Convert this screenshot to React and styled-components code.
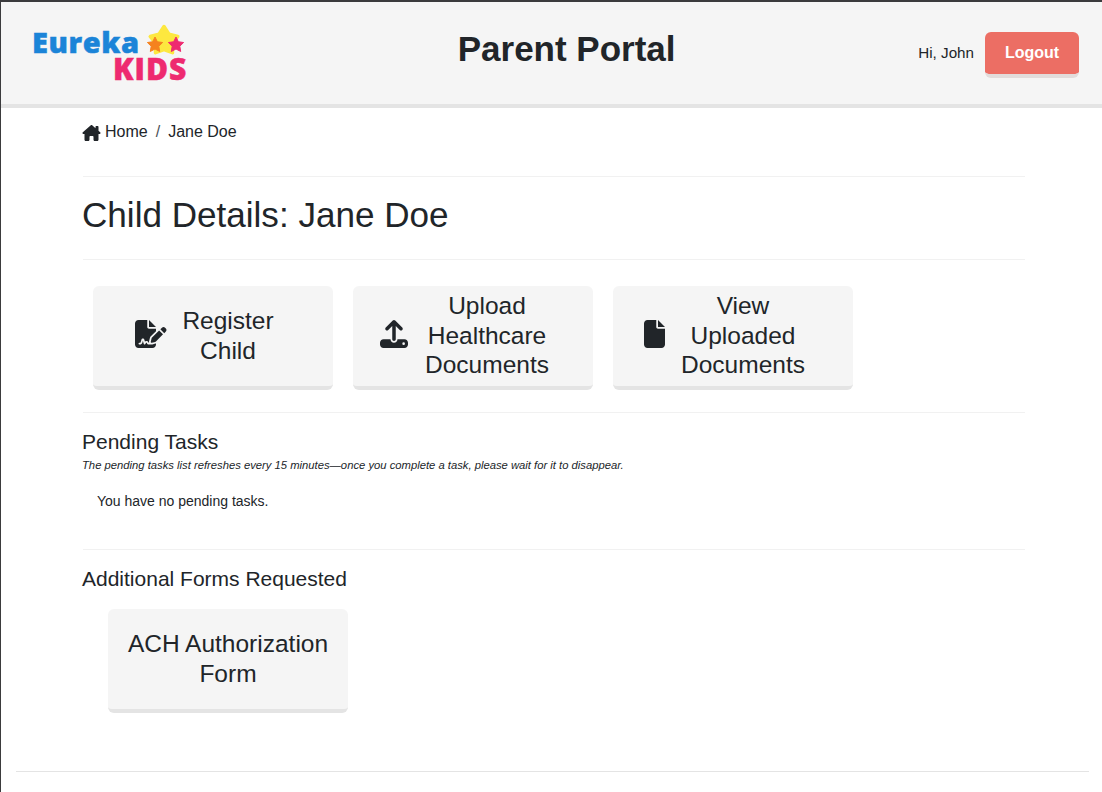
import React from 'react';
import styled, { createGlobalStyle } from 'styled-components';
import { FaHouseChimney, FaFileSignature, FaUpload, FaFile } from 'react-icons/fa6';

const GlobalStyle = createGlobalStyle`
  html, body {
    margin: 0;
    padding: 0;
    background: #fff;
  }
  body {
    font-family: "Liberation Sans", Arial, sans-serif;
    color: #212529;
  }
`;

const Page = styled.div`
  min-height: 790px;
  border-top: 2px solid #3b3b3d;
  border-left: 1px solid #3b3b3d;
  display: flex;
  flex-direction: column;
`;

const Header = styled.header`
  height: 102px;
  box-sizing: content-box;
  background: #f5f5f5;
  border-bottom: 4px solid #e4e4e4;
  display: flex;
  align-items: center;
  justify-content: space-between;
  padding: 0 23px 0 31px;
`;

const Brand = styled.div`
  width: 183px;
  align-self: flex-start;
  margin-top: 22px;
  display: flex;
  flex-direction: column;
`;

const BrandTop = styled.div`
  display: flex;
  align-items: flex-start;
  height: 33px;
`;

const BrandEureka = styled.span`
  width: 114px;
  margin-top: 3px;
  font-family: "Open Sans", sans-serif;
  font-weight: 800;
  font-size: 29px;
  line-height: 30px;
  letter-spacing: 0.6px;
  color: #1b84d8;
  -webkit-text-stroke: 0.5px #1b84d8;
`;

const BrandStars = styled.svg`
  width: 39px;
  height: 31px;
  flex: none;
`;

const BrandKids = styled.span`
  margin-left: 81px;
  font-family: "Open Sans", sans-serif;
  font-weight: 800;
  font-size: 30px;
  line-height: 24px;
  letter-spacing: 1px;
  color: #ee2a70;
  -webkit-text-stroke: 0.5px #ee2a70;
`;

const Title = styled.h1`
  margin: -8px 0 0;
  font-size: 35px;
  line-height: 1.2;
  font-weight: 700;
`;

const UserBox = styled.div`
  display: flex;
  align-items: center;
  gap: 11px;
  margin-top: 3px;
`;

const Greeting = styled.span`
  font-size: 15.2px;
  margin-bottom: 4px;
`;

const Logout = styled.button`
  width: 94px;
  height: 46px;
  border: 0;
  border-bottom: 4px solid #e2dcdb;
  background: #ec6e64;
  background-clip: padding-box;
  border-radius: 6px;
  color: #fff;
  font: 700 16px "Liberation Sans", Arial, sans-serif;
`;

const Main = styled.main`
  padding: 0 77px 0 81px;
`;

const Crumbs = styled.nav`
  display: flex;
  align-items: center;
  height: 68px;
  padding-bottom: 20px;
  box-sizing: border-box;
  font-size: 16px;
  svg {
    width: 19px;
    height: 16px;
    margin-right: 4px;
    margin-top: 2px;
  }
`;

const CrumbSep = styled.span`
  margin: 0 8px;
  color: #4b5157;
`;

const Rule = styled.hr`
  margin: 0 0 0 1px;
  border: 0;
  border-top: 1px solid #f1f1f1;
`;

const PageHeading = styled.h2`
  margin: 0;
  height: 82px;
  padding-bottom: 7px;
  box-sizing: border-box;
  display: flex;
  align-items: center;
  font-size: 35.1px;
  font-weight: 400;
`;

const ButtonRow = styled.div`
  display: flex;
  gap: 20px;
  padding: ${p => p.$top}px 10px ${p => p.$bottom}px ${p => p.$inset}px;
`;

const BigButton = styled.button`
  width: 240px;
  height: 104px;
  display: flex;
  align-items: center;
  justify-content: ${p => (p.$pad ? 'flex-start' : 'center')};
  gap: ${p => p.$gap || 0}px;
  padding: 0 0 1px ${p => p.$pad || 0}px;
  background: #f5f5f5;
  background-clip: padding-box;
  border: 0;
  border-bottom: 4px solid #e4e4e4;
  border-radius: 6px;
  color: #212529;
  font: 400 24.5px/29.4px "Liberation Sans", Arial, sans-serif;
  svg {
    flex: none;
    width: ${p => p.$iconWidth}px;
    height: 28px;
    margin-bottom: 3px;
  }
`;

const ButtonLabel = styled.span`
  display: block;
  text-align: center;
  width: ${p => p.$width}px;
`;

const SectionTitle = styled.h3`
  margin: 0;
  padding-top: ${p => p.$top}px;
  font-size: 21px;
  line-height: 24px;
  font-weight: 400;
`;

const Note = styled.p`
  margin: 5px 0 0;
  font-size: 11.25px;
  line-height: 13px;
  font-style: italic;
`;

const Empty = styled.p`
  margin: 0;
  padding: 19px 15px 38px;
  font-size: 14px;
  line-height: 20px;
`;

const Footer = styled.footer`
  margin: auto 13px 20px 15px;
  border-top: 1px solid #e4e4e4;
`;

// five pointed star, as polygon points
const starPoints = (cx, cy, outer, inner) =>
  Array.from({ length: 10 }, (_, i) => {
    const radius = i % 2 ? inner : outer;
    const angle = (Math.PI / 5) * i - Math.PI / 2;
    return `${cx + radius * Math.cos(angle)},${cy + radius * Math.sin(angle)}`;
  }).join(' ');

const Stars = () => (
  <BrandStars viewBox="0 0 39 31">
    <polygon points={starPoints(18, 17, 14.5, 8.5)} fill="#fde83f" stroke="#fde83f" strokeWidth="3.5" strokeLinejoin="round" />
    <polygon points={starPoints(9, 21, 8, 4)} fill="#f5821f" stroke="#f5821f" strokeWidth="1" strokeLinejoin="round" />
    <polygon points={starPoints(30, 21, 8, 4)} fill="#ee2a70" stroke="#ee2a70" strokeWidth="1" strokeLinejoin="round" />
  </BrandStars>
);

export default function App() {
  return (
    <Page>
      <GlobalStyle />
      <Header>
        <Brand>
          <BrandTop>
            <BrandEureka>Eureka</BrandEureka>
            <Stars />
          </BrandTop>
          <BrandKids>KIDS</BrandKids>
        </Brand>
        <Title>Parent Portal</Title>
        <UserBox>
          <Greeting>Hi, John</Greeting>
          <Logout>Logout</Logout>
        </UserBox>
      </Header>
      <Main>
        <Crumbs>
          <FaHouseChimney />
          Home
          <CrumbSep>/</CrumbSep>
          Jane Doe
        </Crumbs>
        <Rule />
        <PageHeading>Child Details: Jane Doe</PageHeading>
        <Rule />
        <ButtonRow $inset={11} $top={26} $bottom={22}>
          <BigButton $pad={42} $gap={6.5} $iconWidth={31.5}>
            <FaFileSignature />
            <ButtonLabel $width={110}>Register Child</ButtonLabel>
          </BigButton>
          <BigButton $pad={27} $gap={14} $iconWidth={28}>
            <FaUpload />
            <ButtonLabel $width={130}>Upload Healthcare Documents</ButtonLabel>
          </BigButton>
          <BigButton $pad={31} $gap={13} $iconWidth={21}>
            <FaFile />
            <ButtonLabel $width={130}>View Uploaded Documents</ButtonLabel>
          </BigButton>
        </ButtonRow>
        <Rule />
        <SectionTitle $top={17}>Pending Tasks</SectionTitle>
        <Note>The pending tasks list refreshes every 15 minutes—once you complete a task, please wait for it to disappear.</Note>
        <Empty>You have no pending tasks.</Empty>
        <Rule />
        <SectionTitle $top={17}>Additional Forms Requested</SectionTitle>
        <ButtonRow $inset={26} $top={18} $bottom={0}>
          <BigButton>
            <ButtonLabel $width={210}>ACH Authorization Form</ButtonLabel>
          </BigButton>
        </ButtonRow>
      </Main>
      <Footer />
    </Page>
  );
}
